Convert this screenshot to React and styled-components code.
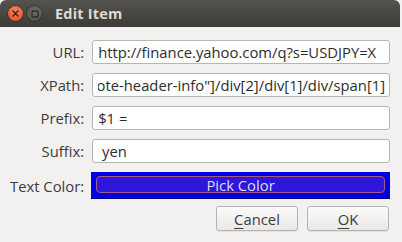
import React, { useLayoutEffect, useRef } from "react";
import styled, { createGlobalStyle } from "styled-components";

const GlobalStyle = createGlobalStyle`
  html, body {
    margin: 0;
    padding: 0;
    background: #f2f1f0;
  }
  body {
    font-family: "Open Sans", "DejaVu Sans", sans-serif;
  }
`;

const Window = styled.div`
  width: 402px;
  height: 242px;
  display: flex;
  flex-direction: column;
  background: #f2f1f0;
  overflow: hidden;
`;

const TitleBar = styled.div`
  height: 27px;
  flex-shrink: 0;
  display: flex;
  align-items: center;
  padding-left: 8px;
  gap: 4px;
  border-radius: 6px 6px 0 0;
  background: linear-gradient(#55534f, #3c3b37);
  margin-right: 2px;
`;

const WinButton = styled.div`
  width: 15px;
  height: 15px;
  border-radius: 50%;
  display: flex;
  align-items: center;
  justify-content: center;
  background: ${(p) =>
    p.$close
      ? "radial-gradient(circle at 50% 35%, #f58660, #df4a1f)"
      : "radial-gradient(circle at 50% 35%, #6d6b66, #4e4d49)"};
  box-shadow: 0 0 0 1px rgba(0, 0, 0, 0.25);
`;

const Title = styled.div`
  margin-left: 9px;
  color: #dfdbd2;
  font-weight: 700;
  font-size: 14.5px;
  letter-spacing: 0.2px;
`;

const Form = styled.div`
  display: grid;
  grid-template-columns: auto 1fr;
  column-gap: 8px;
  row-gap: 9px;
  padding: 13px 12px 0 10px;
  align-items: center;
`;

const Label = styled.div`
  text-align: right;
  font-size: 14.8px;
  color: #3c3c3c;
`;

const Field = styled.input`
  height: 24px;
  box-sizing: border-box;
  width: 100%;
  min-width: 0;
  border: 1px solid #b9b6b1;
  border-radius: 3px;
  background: #fff;
  padding: 0 4px 0 5px;
  margin: 0;
  outline: none;
  font-family: "Open Sans", "DejaVu Sans", sans-serif;
  font-size: 14.8px;
  color: #2d2d2d;
`;

const ColorButton = styled.div`
  height: 27px;
  margin-left: -1px;
  box-sizing: border-box;
  padding: 4px 5px 5px 5px;
  background: #0000e3;
  border-bottom: 1px solid #00008a;
  display: flex;
`;

const ColorInner = styled.div`
  flex: 1;
  border: 1px solid #a45a86;
  border-radius: 4px;
  background: #2e16db;
  color: #dcdcf4;
  font-size: 14.8px;
  display: flex;
  align-items: center;
  justify-content: center;
`;

const Buttons = styled.div`
  display: flex;
  justify-content: flex-end;
  gap: 9px;
  padding: 7px 13px 0 0;
`;

const Button = styled.div`
  width: 80px;
  height: 23px;
  border: 1px solid #b7b4af;
  border-radius: 3px;
  background: linear-gradient(#fbfbfa, #e9e8e6);
  box-shadow: 0 1px 0 rgba(0, 0, 0, 0.06);
  display: flex;
  align-items: center;
  justify-content: center;
  font-size: 14.8px;
  color: #3c3c3c;

  u {
    text-decoration-thickness: 1px;
    text-underline-offset: 3px;
  }
`;

const rows = [
  { label: "URL:", value: "http://finance.yahoo.com/q?s=USDJPY=X" },
  {
    label: "XPath:",
    value: '//*[@id="quote-header-info"]/div[2]/div[1]/div/span[1]',
    end: true,
  },
  { label: "Prefix:", value: "$1 =" },
  { label: "Suffix:", value: " yen" },
];

const TextField = ({ value, end }) => {
  const ref = useRef(null);
  useLayoutEffect(() => {
    if (end && ref.current) ref.current.scrollLeft = ref.current.scrollWidth;
  }, [end]);
  return <Field ref={ref} defaultValue={value} readOnly />;
};

const App = () => {
  return (
    <Window>
      <GlobalStyle />
      <TitleBar>
        <WinButton $close>
          <svg width="7" height="7" viewBox="0 0 7 7">
            <path
              d="M1 1L6 6M6 1L1 6"
              stroke="#3a1a10"
              strokeWidth="1.4"
              strokeLinecap="round"
            />
          </svg>
        </WinButton>
        <WinButton>
          <svg width="8" height="8" viewBox="0 0 8 8">
            <rect
              x="1"
              y="1"
              width="6"
              height="6"
              rx="1"
              fill="none"
              stroke="#2e2d2a"
              strokeWidth="1.3"
            />
          </svg>
        </WinButton>
        <Title>Edit Item</Title>
      </TitleBar>
      <Form>
        {rows.map((r) => (
          <React.Fragment key={r.label}>
            <Label>{r.label}</Label>
            <TextField value={r.value} end={r.end} />
          </React.Fragment>
        ))}
        <Label>Text Color:</Label>
        <ColorButton>
          <ColorInner>Pick Color</ColorInner>
        </ColorButton>
      </Form>
      <Buttons>
        <Button>
          <span>
            <u>C</u>ancel
          </span>
        </Button>
        <Button>
          <span>
            <u>O</u>K
          </span>
        </Button>
      </Buttons>
    </Window>
  );
};

export default App;
